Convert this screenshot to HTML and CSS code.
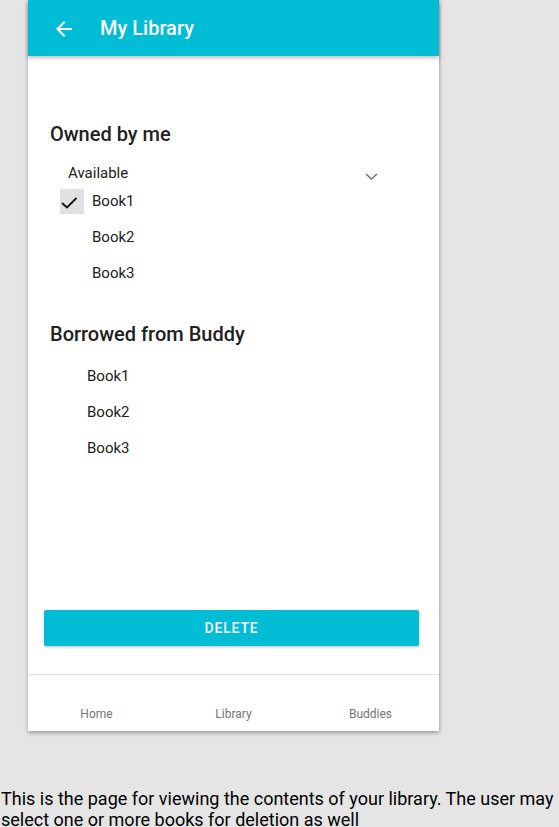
FILE: index.html
```html
<!DOCTYPE html>
<html>
<head>
<meta charset="utf-8">
<link rel="stylesheet" href="styles.css">
</head>
<body>
<div class="phone">
  <header class="appbar">
    <svg class="back" width="24" height="24" viewBox="0 0 24 24"><path d="M20 11H7.83l5.59-5.59L12 4l-8 8 8 8 1.41-1.41L7.83 13H20v-2z" fill="#fff"/></svg>
    <h1 class="title">My Library</h1>
  </header>
  <main class="content">
    <h2 class="section-title first">Owned by me</h2>
    <div class="select-row">
      <span class="select-label">Available</span>
      <svg class="chevron" width="13" height="7" viewBox="0 0 13 7"><polyline points="1,1 6.5,6 12,1" fill="none" stroke="#757575" stroke-width="1.6"/></svg>
    </div>
    <ul class="owned-list">
      <li class="owned-item"><span class="check selected"><svg width="24" height="24" viewBox="0 0 24 24"><polyline points="2,14 7,18.5 16.5,9" fill="none" stroke="#111" stroke-width="1.8"/></svg></span><span>Book1</span></li>
      <li class="owned-item"><span class="check"></span><span>Book2</span></li>
      <li class="owned-item"><span class="check"></span><span>Book3</span></li>
    </ul>
    <h2 class="section-title second">Borrowed from Buddy</h2>
    <ul class="borrowed-list">
      <li class="borrowed-item">Book1</li>
      <li class="borrowed-item">Book2</li>
      <li class="borrowed-item">Book3</li>
    </ul>
  </main>
  <div class="actions">
    <button class="delete-btn">DELETE</button>
  </div>
  <nav class="bottom-nav">
    <span class="nav-item">Home</span>
    <span class="nav-item">Library</span>
    <span class="nav-item">Buddies</span>
  </nav>
</div>
<p class="caption">This is the page for viewing the contents of your library. The user may select one or more books for deletion as well</p>
</body>
</html>
```
FILE: styles.css
```css
* { box-sizing: border-box; }
html, body {
  margin: 0;
  padding: 0;
  background: #e5e5e5;
  font-family: Roboto, "Liberation Sans", sans-serif;
}
.phone {
  margin-left: 28px;
  width: 411px;
  height: 731px;
  background: #fff;
  display: flex;
  flex-direction: column;
  box-shadow: 0 2px 4px rgba(0,0,0,0.3), 1px 0 2px rgba(0,0,0,0.12);
}
.appbar {
  height: 56px;
  background: #00bcd4;
  display: flex;
  align-items: center;
  padding-left: 24px;
  box-shadow: 0 2px 4px rgba(0,0,0,0.25);
  position: relative;
  z-index: 1;
  flex-shrink: 0;
}
.back { margin-top: 2px; }
.title {
  margin: 0 0 0 24px;
  color: #fff;
  font-size: 20px;
  font-weight: 500;
  line-height: 24px;
}
.content {
  flex: 1;
  padding-left: 22px;
}
.section-title {
  margin: 0;
  font-size: 20px;
  font-weight: 500;
  line-height: 24px;
  color: #212121;
}
.section-title.first { margin-top: 66px; }
.section-title.second { margin-top: 31px; }
.select-row {
  margin-top: 17px;
  height: 20px;
  display: flex;
  align-items: center;
  padding-left: 18px;
  width: 328px;
  justify-content: space-between;
}
.select-label {
  font-size: 15px;
  line-height: 20px;
  color: #212121;
}
.chevron { margin-top: 6px; }
ul { list-style: none; margin: 0; padding: 0; }
.owned-item {
  height: 36px;
  display: flex;
  align-items: center;
  padding-left: 10px;
  font-size: 15px;
  color: #212121;
}
.check {
  width: 24px;
  height: 25px;
  margin-right: 8px;
  display: block;
}
.check.selected { background: #e0e0e0; }
.check svg { display: block; }
.borrowed-list { margin-top: 12px; }
.borrowed-item {
  height: 36px;
  line-height: 36px;
  padding-left: 37px;
  font-size: 15px;
  color: #212121;
}
.actions {
  padding: 0 0 28px 16px;
}
.delete-btn {
  display: block;
  width: 375px;
  height: 36px;
  border: none;
  border-radius: 2px;
  background: #00bcd4;
  color: #fff;
  font-family: Roboto, "Liberation Sans", sans-serif;
  font-size: 14px;
  font-weight: 500;
  letter-spacing: 0.8px;
  box-shadow: 0 1px 3px rgba(0,0,0,0.25);
  padding: 0;
}
.bottom-nav {
  height: 57px;
  border-top: 1px solid #e0e0e0;
  display: grid;
  grid-template-columns: 1fr 1fr 1fr;
  padding-top: 31px;
}
.nav-item {
  text-align: center;
  font-size: 12px;
  line-height: 16px;
  color: #757575;
}
.caption {
  margin: 57px 0 0 0;
  font-size: 18px;
  line-height: 21px;
  color: #000;
  padding-left: 1px;
}
```
